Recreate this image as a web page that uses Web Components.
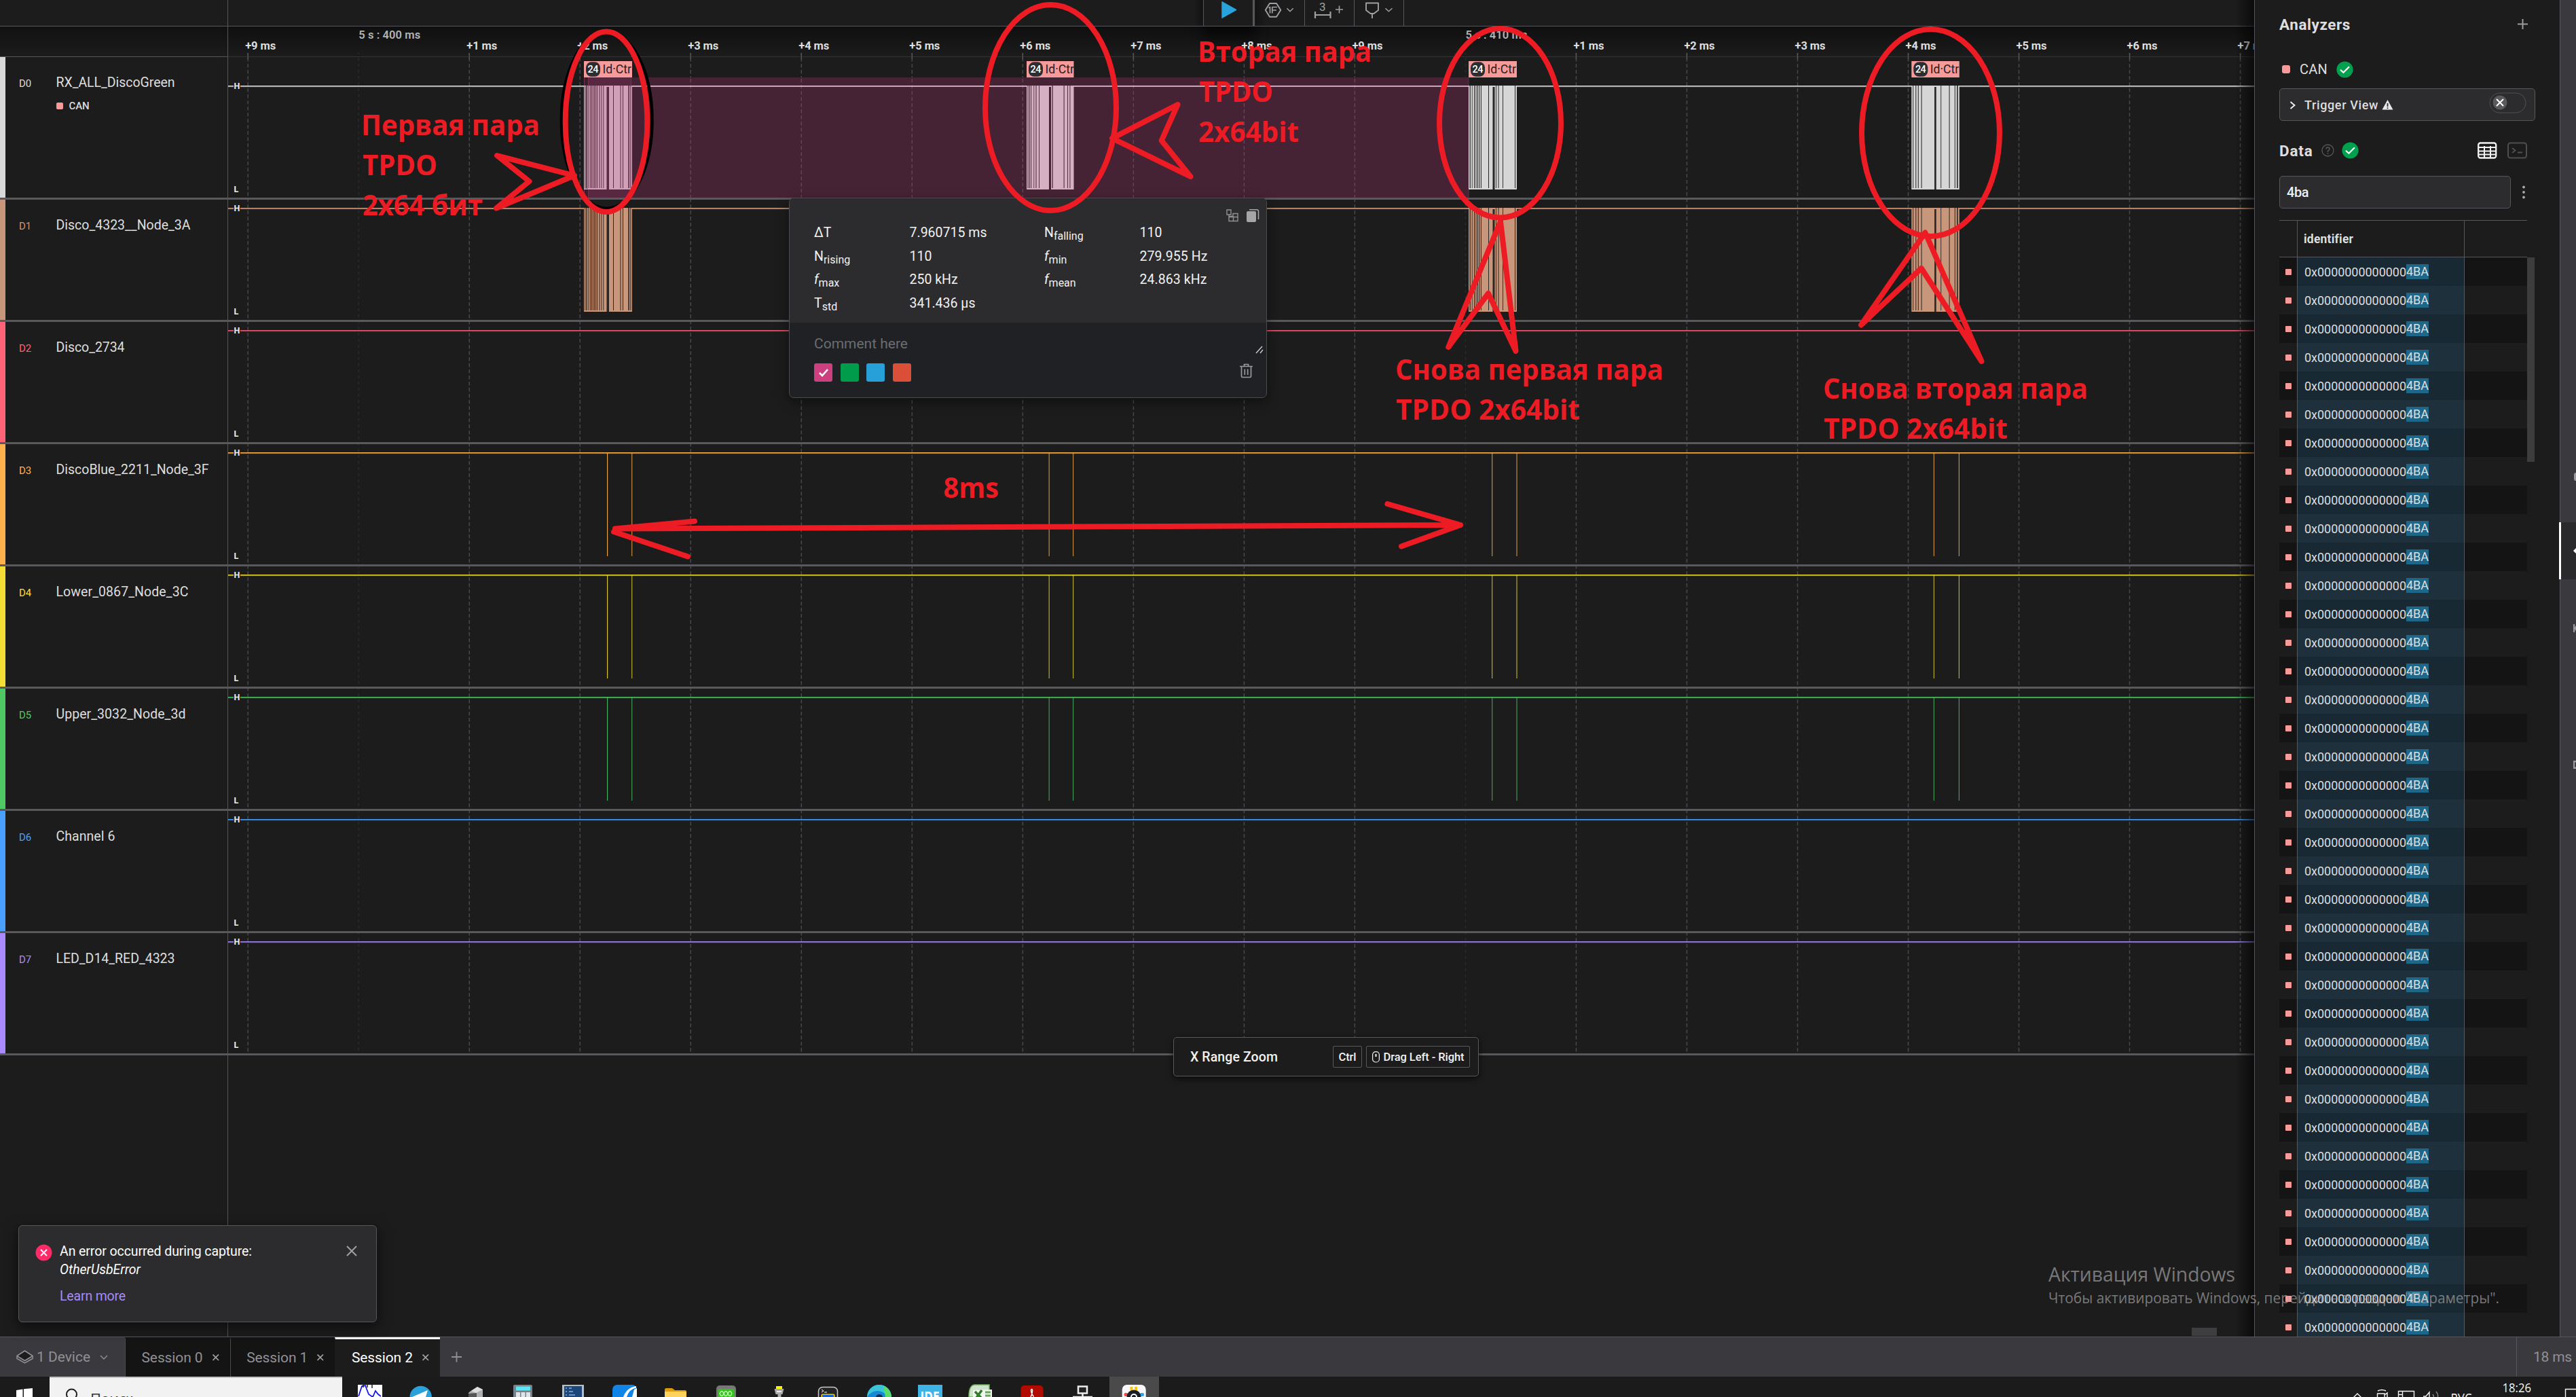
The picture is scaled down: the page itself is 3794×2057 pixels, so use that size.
<!DOCTYPE html>
<html lang="ru">
<head>
<meta charset="utf-8">
<title>Logic analyzer</title>
<style>
html,body{margin:0;padding:0;background:#1c1c1c;overflow:hidden}
body{width:3794px;height:2057px;font-family:Roboto,"Liberation Sans",sans-serif;color:#dedede}
</style>
</head>
<body>
<logic-app></logic-app>
<script>
const define=(name,html,init)=>customElements.define(name,class extends HTMLElement{
  constructor(){super();this.attachShadow({mode:'open'});}
  connectedCallback(){
    if(this.ready)return;this.ready=true;
    this.shadowRoot.innerHTML=typeof html==='function'?html(this):html;
    if(init)init(this);
  }
});

/* Text that tracks its letters to fill a given width */
define('ui-text','<style>:host{display:inline-block;white-space:pre;flex:none;justify-self:start}</style><slot></slot>',el=>{
  const w=+el.getAttribute('w');
  if(!w)return;
  const n=[...el.textContent].length,cur=el.getBoundingClientRect().width;
  if(cur)el.style.letterSpacing=((w-cur)/n).toFixed(3)+'px';
});

/* ---------- channel sidebar ---------- */
define('channel-row',el=>`<style>
:host{display:flex;height:177px;border-bottom:3px solid #59585e;box-sizing:content-box}
:host([analyzer]){height:207px}
.s{width:8px;background:${el.getAttribute('color')}}
.i{width:54.5px;padding:29.5px 0 0 20px;box-sizing:content-box;font-size:15px;line-height:18px;color:${el.getAttribute('color')};flex:none}
.n{font-size:19.5px;line-height:23px;padding-top:26px;color:#dedede}
.a{display:flex;align-items:center;gap:9px;font-size:15px;line-height:18px;font-weight:500;margin-top:14px}
.a i{width:10px;height:10px;border-radius:2px;background:#f79a9a}
</style><div class="s"></div><div class="i">${el.getAttribute('id')}</div><div class="n"><ui-text w="${el.getAttribute('w')}">${el.getAttribute('name')}</ui-text>${el.hasAttribute('analyzer')?'<div class="a"><i></i><ui-text w="30">CAN</ui-text></div>':''}</div>`);

define('channel-list',`<style>
:host{display:flex;flex-direction:column;width:335px;border-right:1px solid #57565c;flex:none}
.t{height:38px;border-bottom:1px solid #57565c}
.h{height:44px;border-bottom:1px solid #57565c;background:linear-gradient(#111,#1c1c1c)}
</style><div class="t"></div><div class="h"></div>
<channel-row analyzer id="D0" w="175" name="RX_ALL_DiscoGreen" color="#d9d9d9"></channel-row>
<channel-row id="D1" w="198" name="Disco_4323__Node_3A" color="#c8967a"></channel-row>
<channel-row id="D2" w="101" name="Disco_2734" color="#ff6378"></channel-row>
<channel-row id="D3" w="225" name="DiscoBlue_2211_Node_3F" color="#ffb14e"></channel-row>
<channel-row id="D4" w="195" name="Lower_0867_Node_3C" color="#f5de33"></channel-row>
<channel-row id="D5" w="191" name="Upper_3032_Node_3d" color="#50c864"></channel-row>
<channel-row id="D6" w="87" name="Channel 6" color="#4aa0ff"></channel-row>
<channel-row id="D7" w="175" name="LED_D14_RED_4323" color="#a98bff"></channel-row>`);

/* ---------- waveform canvas ---------- */
const LANES=['#d5d5d5','#c8967a','#e0586c','#f2a849','#e0cf33','#4bb862','#4596ee','#9d84ee'];
const BURSTS=[
 [860,71,[[1.3,.8],[3.4,1.3],[6.5,.9],[9,.9],[11,1],[13,.9],[15,1],[17,.9],[19,1],[22.4,1],[25.4,.9],[28.4,.9],[33.5,3.5],[43,1],[53.5,1],[57,1],[65.3,1.6],[68.4,1]]],
 [1512,69.5,[[1.6,1],[4,.9],[6.3,.9],[10.4,.8],[13.5,1],[18,.9],[33,3],[37.5,1.2],[54.6,1],[60,.9],[63.5,.9]]],
 [2163,71,[[1.6,1.2],[4.8,.8],[8,1],[10.5,1],[13,1],[15.5,1],[18,.9],[29,1],[35.5,3],[40,.9],[43.5,1],[50,.9],[68,1]]],
 [2815.3,70.5,[[2,.9],[6,1],[9.5,1],[14.3,1],[33.8,2.6],[43,.9],[55.3,1],[63.5,1],[66.8,1.6]]]];
const PULSES=[894.6,930.7,1545.2,1580.6,2197.7,2234,2848.4,2885.4];
define('wave-canvas',()=>{
  let g='';
  const names=['+9','','+1','+2','+3','+4','+5','+6','+7','+8','+9','','+1','+2','+3','+4','+5','+6','+7'];
  names.forEach((n,i)=>{
    const x=365.2+163.02*i;
    g+=`<path d="M${x} 78V1551" stroke="${n?'#48484b':'#2b2b2d'}" stroke-width="1.5" stroke-dasharray="${n?'5.5 3.5':'4 5'}" stroke-dashoffset="2"/>`;
    g+=n?`<path d="M${x} 78v9" stroke="#58585a" stroke-width="1.4"/><text x="${x-4}" y="73" font-size="16.5" font-weight="700" fill="#dedede" textLength="45">${n} ms</text>`
       :`<text x="${x}" y="56.5" font-size="16.5" font-weight="600" fill="#b4b4b4" textLength="91" xml:space="preserve">5 s : ${i<5?400:410} ms</text>`;
  });
  const shot=(x,w,gaps,y,color,bg)=>{
    let s=`<rect x="${x}" y="${y}" width="${w}" height="153" fill="${color}"/>`;
    gaps.forEach(([o,gw])=>s+=`<rect x="${x+o}" y="${y+(gw>2.5?2:0)}" width="${gw}" height="151" fill="${bg}"/>`);
    return s;
  };
  let w='';
  LANES.forEach((c,i)=>{
    const y=126+180*i;
    w+=`<rect x="336" y="${y}" width="2984" height="1.6" fill="${c}"/><rect x="336" y="${y+1.5}" width="2984" height=".7" fill="${c}" opacity=".5"/>`;
    if(i>2&&i<6)PULSES.forEach((p,k)=>w+=`<rect x="${p-.6}" y="${y}" width="1.2" height="153" fill="${c}" opacity="${k?.78:.95}"/>`);
  });
  w+=`<rect x="860" y="114" width="1303" height="177" fill="#462334"/><rect x="866" y="114" width="64" height="177" fill="#57283f"/><rect x="860" y="114" width="6" height="177" fill="#37222b"/>
  <path d="M860.5 114v177M866.5 114v177M929.5 114v177" stroke="#7a2f52" stroke-width="1"/><path d="M2163 114v177" stroke="#5d3048"/>`;
  for(let i=4;i<11;i++)w+=`<path d="M${365.2+163.02*i} 116V291" stroke="#644556" stroke-width="1.4" stroke-dasharray="5.5 3.5"/>`;
  w+=`<rect x="930" y="126" width="1233" height="1.8" fill="#d8b8c8"/>`;
  BURSTS.forEach((b,k)=>{
    w+=shot(...b,126,['#d0a0b6','#d5b0c2','#d6d6d6','#d6d6d6'][k],['#5a2c43','#462334','#242424','#242424'][k]);
    w+=shot(...b,306,'#c8967a','#2a2624');
    w+=`<rect x="${b[0]}" y="90" width="${b[1]}" height="24" fill="#f79a9a"/><rect x="${b[0]+3}" y="91.3" width="21" height="21.5" rx="8" fill="#2b2d31"/>
    <text x="${b[0]+5.6}" y="107.4" font-size="14.5" font-weight="500" fill="#fff" textLength="15.8">24</text><text x="${b[0]+27.5}" y="108" font-size="18.5" font-weight="400" fill="#2a1c1c" textLength="42.5" lengthAdjust="spacingAndGlyphs">Id·Ctr</text>`;
  });
  w+='<rect x="860" y="126" width="3" height="153" fill="#cfb7c2"/><path d="M861.8 127v151M864.5 127v151" stroke="#42222f"/>';
  LANES.forEach((c,i)=>{
    const y=126+180*i, sep=291+180*i;
    w+=`<rect x="336" y="${sep}" width="2984" height="3" fill="#59585e"/>
    <rect x="344" y="${y-6}" width="10" height="13" fill="#1c1c1c"/><text x="344.5" y="${y+4.6}" font-size="12.5" font-weight="700" fill="#eee" textLength="8.5">H</text><text x="344.5" y="${y+157.3}" font-size="12.5" font-weight="700" fill="#eee">L</text>`;
  });
  return `<style>:host{display:block;width:2984px;height:1968px}svg{display:block}text{font-family:Roboto,"Liberation Sans",sans-serif}</style>
  <svg width="2984" height="1968" viewBox="336 0 2984 1968">
  <defs><linearGradient id="a" x2="0" y2="1"><stop stop-color="#0f0f0f"/><stop offset="1" stop-color="#1c1c1c"/></linearGradient>
  <linearGradient id="b"><stop stop-color="#000" stop-opacity="0"/><stop offset="1" stop-color="#000" stop-opacity=".6"/></linearGradient>
  <filter id="f" x="-50%" y="-50%" width="200%" height="200%"><feGaussianBlur stdDeviation="9"/></filter></defs>
  <rect x="336" y="39" width="2984" height="45" fill="url(#a)"/>
  <rect x="1770" y="20" width="80" height="36" fill="#000" opacity=".55" filter="url(#f)"/>
  <rect x="336" y="0" width="2984" height="38" fill="#1c1c1c"/>
  <path d="M336 38.5H3320" stroke="#57565c"/><path d="M336 83.5H3320" stroke="#333336"/>
  <rect x="1758" y="0" width="15" height="38" fill="url(#b)" opacity=".6"/><rect x="1849" y="0" width="15" height="38" fill="url(#b)" opacity=".5" transform="matrix(-1 0 0 1 3713 0)"/>
  <path d="M1772.5 0V38M1921.5 0V38M1994.5 0V38M2067.5 0V38" stroke="#57565c"/><path d="M1846.5 0V38" stroke="#57565c" stroke-width="3"/>
  <path d="M1800 2.800V26.200L1820.500 14.500Z" fill="#29a3dc" stroke="#29a3dc" stroke-width="1.500" stroke-linejoin="round"/>
  <g fill="none" stroke="#a0a0a4" stroke-width="1.900" stroke-linejoin="round"><path d="M1870 5H1880L1886.300 14.800L1880 24.800H1870L1863.800 14.800Z"/><path d="M1868.500 11.500L1870.500 10.500V19.500M1873.800 19.500V10.500H1881M1873.800 15H1880" stroke-width="1.700"/>
  <path d="M1895.500 12.300L1900 16.800L1904.700 12.300M2040.500 12.300L2045.300 16.800L2050.500 12.300" stroke-width="1.500"/>
  <path d="M1937 17V27M1959.500 17V27M1937 22H1959.500" stroke-width="2.200"/><path d="M1967 14H1978M1972.500 8.500V19.500" stroke-width="1.600"/>
  <path d="M2012 4.500H2030V15L2023.500 20H2018.500L2012 15ZM2021 20V27"/></g>
  <text x="1943" y="15.500" font-size="17" fill="#a0a0a4">3</text>
  ${g}${w}
  <rect x="3228" y="1955" width="37" height="12" fill="#3e3e41"/>
  <rect x="3292" y="0" width="28" height="1968" fill="url(#b)"/>
  </svg>`;
});

/* ---------- measurement card ---------- */
define('measure-card',`<style>
:host{display:flex;flex-direction:column;box-sizing:border-box;border:1px solid #4b4b50;border-radius:7px;background:#202124;box-shadow:0 6px 18px rgba(0,0,0,.45);overflow:hidden}
.top{height:183px;background:#2c2c2e;display:flex;flex-direction:column}
.ic{display:flex;justify-content:flex-end;gap:11px;padding:16px 10px 0 0;height:17px}
.grid{display:grid;grid-template-columns:140.5px 198.5px 140.5px auto;grid-auto-rows:34.7px;padding:0 0 0 36px;font-size:19.5px;color:#f2f2f2;align-items:center;white-space:nowrap}
sub{font-size:16px;vertical-align:-4px;line-height:0}
.bot{padding:19px 10px 0 36px}
.c{font-size:21px;line-height:24px;color:#6d6d70;display:flex;justify-content:space-between}
.row{display:flex;align-items:center;margin-top:13px;gap:11.7px;height:28px}
.row i{width:27px;height:27px;border-radius:3px;display:block}
</style>
<div class="top"><div class="ic">
<svg width="19" height="19" fill="none" stroke="#919193" stroke-width="1.4"><path d="M1 1h6v7H1zM4 8v4M4 10.500h6V6.500h7v5M4 11.500h6.500v6H4zM10.500 11.500H17v6h-6.500z"/></svg>
<svg width="19" height="19"><rect y="3" width="14" height="16" rx="2" fill="#a5a5a7"/><path d="M4 .8H15.500a2 2 0 0 1 2 2V15" fill="none" stroke="#a5a5a7" stroke-width="1.6"/></svg></div>
<div class="grid"><span>ΔT</span><ui-text w="114">7.960715 ms</ui-text><span>N<sub>falling</sub></span><span>110</span>
<span>N<sub>rising</sub></span><span>110</span><span><em>f</em><sub>min</sub></span><ui-text w="100">279.955 Hz</ui-text>
<span><em>f</em><sub>max</sub></span><span>250 kHz</span><span><em>f</em><sub>mean</sub></span><ui-text w="99">24.863 kHz</ui-text>
<span>T<sub>std</sub></span><ui-text w="97">341.436 µs</ui-text></div></div>
<div class="bot"><div class="c"><ui-text w="138">Comment here</ui-text><svg width="14" height="12" style="margin:15px -7px 0 0"><path d="M2 11L11 1M8 11L12 6" stroke="#ccc" stroke-width="1.400"/></svg></div>
<div class="row"><i style="background:#cd4080"><svg width="27" height="27"><path d="M8 14l4 4 8-9" fill="none" stroke="#fff" stroke-width="2.600"/></svg></i><i style="background:#019b4c"></i><i style="background:#27a0d9"></i><i style="background:#db4f39"></i>
<svg width="20" height="22" style="margin:-5px 0 0 auto;padding-right:9px" fill="none" stroke="#9a9a9c" stroke-width="1.700"><path d="M0 4.500h19M6.500 4V1.500h6V4M2.500 5v14q0 1.500 1.500 1.500h11q1.500 0 1.500-1.500V5M7.300 8.500v8.500M11.700 8.500v8.500"/></svg></div></div>`);

/* ---------- shortcut hint ---------- */
define('zoom-hint',`<style>
:host{display:flex;align-items:center;box-sizing:border-box;border:1px solid #59595d;border-radius:5px;background:#1c1c1c;box-shadow:0 3px 10px #000a;padding:0 12px 0 24px;font-weight:500;color:#f2f2f2}
.k{display:flex;align-items:center;justify-content:center;gap:6px;border:1px solid #59595d;border-radius:2px;height:30px;font-size:16.5px}
</style><ui-text w="129" style="font-size:19.5px">X Range Zoom</ui-text><span class="k" style="width:41px;margin:0 6px 0 auto"><ui-text w="26">Ctrl</ui-text></span>
<span class="k" style="width:151px"><svg width="11" height="17" fill="none" stroke="#f2f2f2" stroke-width="1.200"><rect x=".6" y=".6" width="9.800" height="15.400" rx="4.500"/><path d="M5.500 4v4" stroke-width="2"/></svg><ui-text w="119">Drag Left - Right</ui-text></span>`);

/* ---------- error toast ---------- */
define('error-toast',`<style>
:host{display:flex;box-sizing:border-box;border:1px solid #55555a;border-radius:6px;background:#2c2c2e;box-shadow:0 6px 20px #0009;padding:24px 28px 0 23.5px;font-size:19.5px;line-height:27px;color:#fff}
.b{display:flex;flex-direction:column;margin-left:11.5px;flex:1;align-items:flex-start}
em{line-height:27px}.l{color:#a78bfa;margin-top:11.5px}
</style><svg width="25" height="25" style="margin-top:2.5px"><circle cx="12.500" cy="12.500" r="12" fill="#fe2b69"/><path d="M8 8l9 9m0-9l-9 9" stroke="#fff" stroke-width="1.900"/></svg>
<div class="b"><ui-text w="283">An error occurred during capture:</ui-text><em><ui-text w="119">OtherUsbError</ui-text></em><ui-text class="l" w="97">Learn more</ui-text></div>
<svg width="16" height="16" style="margin-top:5px"><path d="M1 1l14 14m0-14L1 15" stroke="#a0a0a2" stroke-width="2"/></svg>`);

/* ---------- analyzer panel ---------- */
const OK='<svg width="25" height="25"><circle cx="12.5" cy="12.5" r="12.1" fill="#00a04e"/><path d="M6 12.800l4.400 4 8.600-8.600" fill="none" stroke="#fff" stroke-width="2.200"/></svg>';
define('id-row',`<style>
:host{display:flex;height:42px;background:#1c1c1c;width:365px}
:host(:nth-child(odd)){background:#141414}
.m{width:26px;border-right:1px solid #57565c;display:flex;align-items:center}
.m i{width:9px;height:9px;margin-left:9px;background:#f79a9a;border-radius:1px}
.v{width:246px;border-right:1px solid #57565c;background:#1e303b;display:flex;align-items:center;padding-left:10px;box-sizing:border-box;font-size:18px}
:host(:nth-child(odd)) .v{background:#182934}
.x{background:#1f6789;height:22px;line-height:22px}
</style><div class="m"><i></i></div><div class="v"><ui-text w="150">0x0000000000000</ui-text><span class="x"><ui-text w="33">4BA</ui-text></span></div>`);
define('analyzer-panel',`<style>
:host{display:flex;flex-direction:column;width:450px;height:1968px;border-left:1px solid #57565c;background:#1c1c1c;overflow:hidden;padding-left:36px;box-sizing:border-box;flex:none}
.f{display:flex;align-items:center}
.t{font-size:22.5px;font-weight:700}
.box{width:375px;height:46px;border:1px solid #57565c;border-radius:5px;background:#2c2c2e;font-size:18px;font-weight:500}
.in{width:339px;height:46px;border:1px solid #57565c;border-radius:5px;background:#2c2c2e;font-size:20px;font-weight:500;color:#f0f0f0}
.hd{width:365px;height:53px;margin-top:17px;border-top:1px solid #57565c;border-bottom:1px solid #57565c;display:flex;font-size:17.500px;font-weight:700}
.hd div{border-right:1px solid #57565c;display:flex;align-items:center;box-sizing:border-box}
.rows{display:flex;flex:1;min-height:0;overflow:hidden}
.sb{width:11px;height:301px;background:#3d3d3d}
</style>
<div class="f" style="height:71px"><ui-text class="t" w="105">Analyzers</ui-text><svg width="15" height="15" style="margin-left:246px"><path d="M0 7.500h15M7.500 0v15" stroke="#9b9b9d" stroke-width="2"/></svg></div>
<div class="f" style="height:59px"><svg width="12" height="12" style="margin:3px 14px 0 4px"><rect width="12" height="12" rx="3" fill="#f79a9a"/></svg><ui-text w="41" style="font-size:20px;margin:3px 13px 0 0">CAN</ui-text><span class="f" style="margin-top:3px">${OK}</span></div>
<div class="f box"><svg width="9" height="12" style="margin:1px 13px 0 14px"><path d="M1.500 1l6 5-6 5" fill="none" stroke="#eee" stroke-width="1.900"/></svg><ui-text w="109">Trigger View</ui-text>
<svg width="17" height="16" style="margin-left:5px"><path d="M8.500 1L16.500 15.500H.5Z" fill="#e8e8e8"/><path d="M8.500 6v5M8.500 12.300v1.700" stroke="#2c2c2e" stroke-width="1.800"/></svg>
<svg width="56" height="32" style="margin:-4px 0 0 141px"><rect x="1" y="1" width="53" height="29" rx="14.500" fill="none" stroke="#505054"/><circle cx="16" cy="15" r="10.500" fill="#5a5a5c"/><path d="M11 10l10 10m0-10l-10 10" stroke="#fff" stroke-width="2"/></svg></div>
<div class="f" style="height:81px;margin-top:3px;margin-bottom:-3px;width:365px"><ui-text class="t" w="49.500">Data</ui-text>
<svg width="19" height="19" style="margin:0 11px 0 12px" fill="none" stroke="#58585b" stroke-width="1.300"><circle cx="9.500" cy="9.500" r="8.500"/><path d="M7 7.500q0-2.500 2.500-2.500t2.500 2.500q0 1.500-2.500 2.800v1.500M9.500 13v1.700" stroke-width="1.500"/></svg>${OK}
<svg width="29" height="25" style="margin:0 15px 0 auto" fill="none" stroke="#f2f2f2" stroke-width="2.300"><rect x="1.200" y="1.500" width="26" height="22" rx="3"/><path d="M1 8h27M1 13.500h27M1 18.500h27M10 6v17M19 6v17" stroke-width="2"/></svg>
<svg width="29" height="25" fill="none" stroke="#4e4e51" stroke-width="2"><rect x="1" y="1.500" width="27" height="22" rx="3.500"/><path d="M7 9l4.500 3.500L7 16M15 15.500h7"/></svg></div>
<div class="f"><div class="f in"><ui-text w="32" style="margin-left:10px">4ba</ui-text></div><svg width="4" height="22" style="margin-left:17px" fill="#aaa"><circle cx="2" cy="3.500" r="1.900"/><circle cx="2" cy="11" r="1.900"/><circle cx="2" cy="18.500" r="1.900"/></svg></div>
<div class="hd"><div style="width:27px"></div><div style="width:246px;padding-left:9px"><ui-text w="73">identifier</ui-text></div></div>
<div class="rows"><div>${'<id-row></id-row>'.repeat(38)}</div><div class="sb"></div></div>`);

define('side-tabs',`<style>
:host{display:flex;flex-direction:column;width:24px;height:1968px;background:#3a393e;border-left:1px solid #57565c;box-sizing:border-box;flex:none}
.on{height:84px;background:#2a2a2c;margin-top:61px;margin-left:-2px;border-left:3px solid #fff;display:flex;align-items:center;justify-content:flex-end}
.on i{border:4px solid transparent;border-right:4px solid #fff;border-left:0;width:0}
b{align-self:flex-end;width:4px;height:12px;background:#9b9a9f;flex:none}
</style><b style="margin-top:696px;width:3px;border-radius:3px 0 0 3px"></b><div class="on"><i></i></div><b style="margin-top:66px;clip-path:polygon(0 0,55% 0,55% 40%,100% 15%,100% 85%,55% 60%,55% 100%,0 100%)"></b><b style="margin-top:189px;clip-path:polygon(0 0,100% 0,100% 20%,55% 20%,55% 80%,100% 80%,100% 100%,0 100%)"></b>`);

/* ---------- session bar ---------- */
define('session-tab',el=>`<style>
:host{display:flex;align-items:center;width:154.700px;height:58px;box-sizing:border-box;border-left:1px solid #4a494e;background:#141414;padding-left:23.500px;font-size:21px;color:#919096;border-top:3px solid #141414;padding-bottom:1px}
:host([on]){background:#1c1c1c;color:#fff;border-top-color:#fff;border-left-color:#1c1c1c}
svg{margin-left:14px;margin-top:-1px}
</style><ui-text w="90">${el.getAttribute('name')}</ui-text><svg width="10" height="10"><path d="M.5.5l8.500 8.500m0-8.500L.5 9" stroke="#a3a2a7" stroke-width="1.700"/></svg>`);
define('session-bar',`<style>
:host{display:flex;height:58px;background:#3a393e;border-top:1px solid #57565c;align-items:center;color:#919096;font-size:21px}
.d{width:184px;display:flex;align-items:center;box-sizing:border-box;padding-left:24px}
.r{margin-left:auto;border-left:1px solid #57565c;height:58px;display:flex;align-items:center;width:88px;box-sizing:border-box;padding-left:24px}
</style><div class="d"><svg width="25" height="20" style="margin-right:5px" fill="none" stroke="#919096" stroke-width="1.500"><path d="M1 8.500L12.500 1 24 8.500 12.500 15.500Z" fill="#1c1c1c" stroke-linejoin="round"/><path d="M1 8.500v4L12.500 19 24 12.500v-4"/></svg><ui-text w="79">1 Device</ui-text><svg width="12" height="7" style="margin-left:14px"><path d="M1 1l5 5 5-5" fill="none" stroke="#919096" stroke-width="1.400"/></svg></div>
<session-tab name="Session 0"></session-tab><session-tab name="Session 1"></session-tab><session-tab name="Session 2" on></session-tab>
<svg width="15" height="16" style="margin-left:17px"><path d="M0 8h15M7.500 .5v15" stroke="#919096" stroke-width="1.800"/></svg><div class="r"><ui-text w="57">18 ms</ui-text></div>`);

/* ---------- desktop taskbar ---------- */
define('task-bar',`<style>
:host{display:flex;height:30px;background:#1b1b1b;overflow:hidden}
svg{display:block;flex:none}.s{width:431px;height:30px;background:#f2f2f2;border-top:2px solid #c3c3c3;flex:none;box-sizing:border-box}
text{font-family:"Open Sans","Noto Sans",sans-serif}
</style><svg width="73" height="30" fill="#fff"><path d="M24 20L33.500 18.500V30H24zM35 18.200L48 17V30H35z"/></svg>
<div class="s"><svg width="431" height="28"><circle cx="32.500" cy="24" r="7.500" fill="none" stroke="#222" stroke-width="2"/><text x="60" y="38.500" font-size="22" fill="#333" textLength="63">Поиск</text></svg></div>
<svg width="3290" height="30" viewBox="504 2027 3290 30">
<rect x="527" y="2039" width="36" height="18" fill="#fff"/><path d="M528 2056L533 2041L538 2040L543 2053L549 2057L553 2048L557 2053L561 2056" fill="none" stroke="#1515f0" stroke-width="1.800"/><path d="M535 2039v4M541 2039v4M548 2039v5" stroke="#222" stroke-width="1.500"/>
<circle cx="619.700" cy="2057" r="16.200" fill="#2aa1da"/><path d="M607 2057L630 2047L627 2057Z" fill="#fff"/>
<path d="M692 2049L703 2042L711 2046V2057H690V2051Z" fill="#aeb0b2"/><path d="M694 2048L703 2042L711 2046L701 2051Z" fill="#dcdedf"/><path d="M702 2051V2057H690V2052Z" fill="#555"/>
<rect x="756" y="2039" width="28" height="20" rx="2" fill="#77828a"/><rect x="760" y="2041.500" width="21" height="6" fill="#5ce4f7"/><path d="M760 2050h6v7h-6zM767.500 2050h6v7h-6zM775 2050h6v7h-6z" fill="#dfe4e8"/>
<rect x="828" y="2039" width="32" height="18" fill="#aebfca"/><rect x="831" y="2041" width="26" height="16" fill="#1d477a"/><path d="M833 2044h2M838 2044h4M833 2049h2M838 2049h6M833 2054h2M838 2054h9" stroke="#7fb4dc" stroke-width="1.500"/>
<rect x="902" y="2039" width="36" height="30" rx="7" fill="#1184e8"/><path d="M918 2057Q923 2043 937 2041V2043.500Q927 2045 923 2057ZM934 2046L938 2044V2057H931Z" fill="#fff"/>
<path d="M979 2046q0-2 2-2h9l4 3h15q2 0 2 2v10h-32z" fill="#dd9a0c"/><path d="M979 2049h32v9h-32z" fill="#ffd25c"/>
<rect x="1055" y="2040" width="29" height="24" rx="5" fill="#777"/><rect x="1058" y="2045" width="24" height="14" rx="2" fill="#35c21f"/><path d="M1060 2052q3-7 6 0t6 0 6 0M1060 2052q3 7 6 0t6 0 6 0" fill="none" stroke="#b7f5a8" stroke-width="1.500"/>
<rect x="1143" y="2041" width="9" height="4" fill="#f8f500"/><path d="M1140.500 2045h14l-2 8h-2v4h-5v-4h-3z" fill="#aaa"/><path d="M1144 2049h7" stroke="#fff" stroke-width="1.500"/>
<rect x="1205.500" y="2042.500" width="28" height="24" rx="6" fill="#222426" stroke="#c9c9c9" stroke-width="1.500"/><path d="M1210 2046l3 2-3 2M1214 2050h4" stroke="#fff" fill="none"/><rect x="1209.500" y="2052.500" width="20" height="6" rx="2" fill="#ffd817"/><rect x="1211" y="2053.800" width="17" height="5" fill="#1463cc"/>
<circle cx="1295" cy="2057" r="18" fill="#1688d4"/><path d="M1277 2057a18 18 0 0 1 36 0h-8q0-7-11-9-10-1-17 9z" fill="#3cc3d9"/><path d="M1301 2040.500q11 5 12 16.500h-9z" fill="#5bdc62"/><path d="M1290 2057q1-4 5-4t5 4z" fill="#12304d"/>
<rect x="1352" y="2039" width="36" height="18" fill="#3fb3e6"/><text x="1355.500" y="2064" font-size="21" font-weight="700" fill="#fff" textLength="28" lengthAdjust="spacingAndGlyphs">IDE</text>
<path d="M1427 2057q0-18 9-18h21v18z" fill="#cfe3cc" stroke="#6fb45c" stroke-width="1.500"/><path d="M1433 2047l28 -1v11h-28z" fill="#f3f7f1"/><path d="M1436 2049l9 9M1446 2047l-8 11" stroke="#2e7d28" stroke-width="3.500"/><path d="M1451 2050h8M1451 2055h8" stroke="#67a85b" stroke-width="3"/>
<rect x="1503.500" y="2040" width="33" height="30" rx="5" fill="#b10b00"/><path d="M1518 2057q3-6 2.500-10.500-.5-2-2 0 0 5 4 10" fill="none" stroke="#fff" stroke-width="1.500"/>
<rect x="1588" y="2041.500" width="13" height="10" fill="#222" stroke="#eee" stroke-width="2.500"/><path d="M1594.500 2052v4.500M1580 2057h29" stroke="#eee" stroke-width="2.500"/>
<rect x="1634" y="2027" width="73" height="30" fill="#4a4a4a"/><rect x="1652.700" y="2039" width="35" height="32" rx="7" fill="#f7f8fc"/><rect x="1655.500" y="2051" width="6" height="5" rx="2" fill="#f2493c"/><rect x="1679" y="2051" width="6" height="5" rx="2" fill="#2aa7e8"/><circle cx="1670" cy="2057" r="10.500" fill="#1c1e26"/><circle cx="1670" cy="2057" r="4" fill="none" stroke="#fff" stroke-width="2"/><path d="M1666.500 2042v5M1673 2042v5" stroke="#f8c510" stroke-width="4"/>
<g fill="none" stroke="#f4f4f4" stroke-width="1.400"><path d="M3466 2058l6-6 6 6M3502 2048q6-3 12 0M3501.500 2058v-6h10.500v6M3512 2054l4-3v7M3532.500 2058v-9.500h23v9.500M3538.500 2048.500v9M3533 2053.500h5.500M3569 2056h4l5-6v8"/><path d="M3583 2053q2 3 1 5M3588 2049q4 5 2 9" stroke="#888"/><path d="M3795 2045.500h-16.500V2058"/></g>
<text x="3609.500" y="2066" font-size="20" fill="#f4f4f4" textLength="31" lengthAdjust="spacingAndGlyphs">РУС</text><text x="3685.500" y="2050.300" font-size="18" fill="#f4f4f4" textLength="42.500" lengthAdjust="spacingAndGlyphs">18:26</text>
</svg>`);

/* ---------- hand-drawn notes and desktop watermark ---------- */
define('note-layer',()=>{
  const T=(x,y,w,s)=>`<text x="${x}" y="${y}" textLength="${w}" lengthAdjust="spacingAndGlyphs">${s}</text>`;
  return `<style>:host{display:block;pointer-events:none}svg{display:block}text{font-family:"Open Sans","Noto Sans",sans-serif}</style>
<svg width="3794" height="2057">
<ellipse cx="893.700" cy="177" rx="66.800" ry="130" fill="none" stroke="#000" stroke-width="4.500"/>
<g fill="none" stroke="#ed1c24" stroke-width="8" stroke-linejoin="round" stroke-linecap="round">
<ellipse cx="893" cy="179.300" rx="60.300" ry="132.800"/><ellipse cx="1547.500" cy="158.500" rx="96.500" ry="151.500"/><ellipse cx="2209.500" cy="181.300" rx="89.500" ry="139.200"/><ellipse cx="2843.500" cy="195.500" rx="101.500" ry="152.500"/>
<path d="M732 229L846 258.500L731 306.500L779.500 267Z"/><path d="M1734.500 154L1638 203.600L1753.500 260L1710.700 207Z"/><path d="M2210 326L2133.300 511L2192 432L2232.500 517Z"/><path d="M2835.500 342.500L2741 478.500L2829.800 395L2918.500 532Z"/>
<path d="M1023 767.500L906 778.500L2151 773M1013 819.500L904 783M2043.500 742L2151 773L2064 804.500"/></g>
<g fill="#ed1c24" font-size="41" font-weight="700">
${T(532,199,263,'Первая пара')}${T(534,257.600,110,'TPDO')}${T(534,316.500,177,'2x64 бит')}
${T(1764,91,256,'Вторая пара')}${T(1766,150,109,'TPDO')}${T(1765,208.500,148,'2x64bit')}
${T(2055,559,395,'Снова первая пара')}${T(2056,618,271,'TPDO 2x64bit')}
${T(2685,587,390,'Снова вторая пара')}${T(2686,646,271,'TPDO 2x64bit')}
${T(1389.500,733,81.500,'8ms')}</g>
<g fill="#a8a8a8" fill-opacity=".68"><text x="3017" y="1887" font-size="30" textLength="275" lengthAdjust="spacingAndGlyphs">Активация Windows</text>
<text x="3017" y="1919" font-size="21.500" textLength="664" lengthAdjust="spacingAndGlyphs">Чтобы активировать Windows, перейдите в раздел "Параметры".</text></g>
</svg>`;});

define('logic-app',`<style>
:host{display:flex;flex-direction:column;width:3794px;height:2057px;position:relative;background:#1c1c1c;overflow:hidden}
.m{display:flex;height:1968px;flex:none}
measure-card,zoom-hint,error-toast,note-layer{position:absolute}
measure-card{left:1162px;top:291px;width:704px;height:295px}
zoom-hint{left:1728px;top:1527px;width:450px;height:58px}
error-toast{left:27px;top:1804px;width:528px;height:143px}
note-layer{left:0;top:0}
</style>
<div class="m"><channel-list></channel-list><wave-canvas></wave-canvas><analyzer-panel></analyzer-panel><side-tabs></side-tabs></div>
<session-bar></session-bar><task-bar></task-bar>
<measure-card></measure-card><zoom-hint></zoom-hint><error-toast></error-toast><note-layer></note-layer>`);
</script>
</body>
</html>
